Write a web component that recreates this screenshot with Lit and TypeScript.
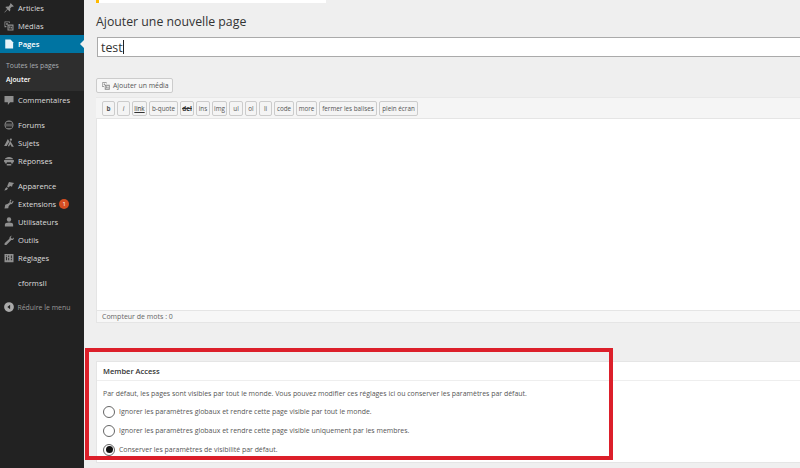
import { LitElement, html, css, svg } from "lit";
import { customElement } from "lit/decorators.js";

const icons: Record<string, any> = {
  pin: svg`<path d="M10.400 1.600l4 4-1.300 1-1-.5-2.600 2.600c.6 1.500.2 2.900-.6 3.900L6.200 9.900 2.400 14l-.6-.5 3.800-4.200-2.500-2.500c1-.9 2.500-1.200 3.900-.6l2.600-2.600-.4-1z"/>`,
  media: svg`<path d="M2 2h7v2H8V3H3v5h1.500v1.500H2z"/><circle cx="5.300" cy="5.300" r="1.200"/><path d="M6 6h8v8H6zm1.500 1.500v5h5v-5z" fill-rule="evenodd"/><path d="M8.300 8.400h1.500v3H8.300zM10.500 9h1.400v2.400h-1.400z"/>`,
  pages: svg`<path d="M3 2h7l3.500 3.500V14H3z"/>`,
  comment: svg`<path d="M2 2.500h12v8.500H9.500L6.500 14.500V11H2z"/>`,
  globe: svg`<path d="M8 2a6 6 0 1 1 0 12A6 6 0 0 1 8 2zM3.600 6.200h8.800V5.500c-.5-.9-1.300-1.600-2.200-1.900H5.800C4.900 3.900 4.100 4.600 3.600 5.500zM3 7.300v1.400h10V7.300zm.6 2.500v.7c.5.900 1.300 1.600 2.200 1.900h4.400c.9-.3 1.700-1 2.200-1.900v-.7z" fill-rule="evenodd"/>`,
  topics: svg`<path d="M6.500 2.500l2 3.500-3.500 6H1.500zM9.500 5l5 8h-3L9.800 9.500 8 12.500l-1.500-.5z"/><circle cx="10.500" cy="3.500" r="1.500"/>`,
  replies: svg`<path d="M8 2.500c2.800 0 5 1.300 5.500 3h-11c.5-1.700 2.700-3 5.500-3zM1.500 6.500h13v3H13l.5 1.500-2 .5-.8-2H5.300l-.8 2-2-.5L3 9.500H1.500zM5 12h6v2H5z"/>`,
  brush: svg`<path d="M8 2.500l7 1.500-2 1.500-1 3.500-2.500-1L7 10 5.500 8.500l1-2.500zM5 9.500l1.500 1.500c-.5 2-2.500 3-5 3 1.200-.8 1-3.200 3.500-4.500z"/>`,
  plugin: svg`<path d="M10 2l1.300.8-1.500 2.400 1.700 1 1.500-2.400 1.200.8-1.700 2.800c-.6 1-1.800 1.300-2.800.8L7.500 11l-.5 2.500L2 14l1-5 3.500-1.500L9 5.600c-.4-1-.2-1.600.2-2.200z"/>`,
  user: svg`<circle cx="8" cy="4.700" r="2.900"/><path d="M2.500 14v-2.500C2.500 9.500 4.500 8.500 8 8.500s5.500 1 5.500 3V14z"/>`,
  tool: svg`<path d="M14.500 4.500c.4 2-1.300 4-3.500 3.600L4.500 14.500c-.6.6-2.400.2-2.500-.5-.2-.8 0-1.500.5-2L8.500 6.300C8.200 4 10 2 12 2.200L10.300 4l.5 1.700 1.700.5z"/>`,
  settings: svg`<path d="M2 2.500h12v11H2zM4 6.500V11h1.200V6.500zm0-2v1h1.200v-1zm3 3V11h1.200V7.500zm0-3v2h1.200v-2zM10.500 9v2h1.200V9zm0-4.500V8h1.200V4.500z" fill-rule="evenodd"/>`,
  collapse: svg`<path d="M8 1.500a6.500 6.500 0 1 1 0 13 6.500 6.500 0 0 1 0-13zM9.500 5L5.800 8l3.700 3z" fill-rule="evenodd"/>`,
};

type Row = { icon?: string; label: string; cls?: string; badge?: boolean };
const top: Row[] = [
  { icon: "pin", label: "Articles", cls: "h-first" },
  { icon: "media", label: "Médias" },
];
const groups: Row[][] = [
  [{ icon: "comment", label: "Commentaires" }],
  [
    { icon: "globe", label: "Forums" },
    { icon: "topics", label: "Sujets" },
    { icon: "replies", label: "Réponses" },
  ],
  [
    { icon: "brush", label: "Apparence" },
    { icon: "plugin", label: "Extensions", badge: true },
    { icon: "user", label: "Utilisateurs" },
    { icon: "tool", label: "Outils" },
    { icon: "settings", label: "Réglages" },
  ],
  [{ label: "cformsII" }],
];
const tools: [string, number, string?][] = [
  ["b", 13, "bold"], ["i", 13, "ital"], ["link", 15, "link"], ["b-quote", 29], ["del", 14, "del"],
  ["ins", 14], ["img", 15], ["ul", 14], ["ol", 12], ["li", 13], ["code", 20], ["more", 21],
  ["fermer les balises", 58], ["plein écran", 39],
];

@customElement("app-root")
export class AppRoot extends LitElement {
  static styles = css`
    :host { display: block; width: 800px; height: 468px; overflow: hidden; position: relative;
      font-family: "Open Sans", sans-serif; background: #efefef; color: #444; }
    .page { display: flex; height: 468px; }
    .side { width: 84px; flex: none; background: #222; color: #ddd; font-size: 7.600px; display: flex; flex-direction: column; }
    .row { height: 18px; display: flex; align-items: center; flex: none; }
    .h-first { margin-top: -1px; }
    .row svg { width: 12px; height: 12px; margin-left: 2.500px; margin-right: 3.500px; fill: #8f8f8f; flex: none; }
    .noicon { padding-left: 18px; }
    .active { background: #0074a2; color: #fff; position: relative; font-weight: 600; }
    .active svg { fill: #e8f3f8; }
    .notch { position: absolute; right: 0; top: 5px; width: 0; height: 0; border: 4px solid transparent; border-right-color: #efefef; border-left-width: 0; }
    .sub { background: #2e2e2e; height: 38px; padding-top: 6.500px; box-sizing: border-box; display: flex; flex-direction: column; gap: 3px; font-size: 6.850px; flex: none; }
    .sub div { padding-left: 6px; height: 11px; line-height: 11px; color: #a8adb2; }
    .sub .cur { color: #fff; font-weight: 600; }
    .gap { height: 7px; flex: none; }
    .badge { width: 10px; height: 10px; border-radius: 50%; background: #d54e21; color: #fff; font-size: 6px; line-height: 10px; text-align: center; margin-left: 3px; }
    .collapse { color: #999; font-size: 6.900px; margin-top: 6px; }
    .collapse svg { fill: #aaa; width: 12px; height: 12px; margin-right: 3px; }
    .main { flex: 1; min-width: 0; padding-left: 12px; display: flex; flex-direction: column; }
    .notice { width: 227px; height: 3px; background: #fff; border-left: 3px solid #ffba00; flex: none; }
    h1 { margin: 9px 0 0; height: 25px; line-height: 20px; font-size: 12.300px; font-weight: 400; color: #333; flex: none; }
    .title { height: 20px; box-sizing: border-box; margin-left: 1px; border: 1px solid #aaa; border-right: 0; background: #fff; display: flex; align-items: center; font-size: 12.400px; color: #333; padding-left: 3px; flex: none; }
    .caret { width: 1px; height: 14px; background: #222; }
    .media { margin-top: 21px; align-self: flex-start; height: 15px; width: 77px; box-sizing: border-box; border: 1px solid #ccc; background: #f7f7f7; border-radius: 2px; font-size: 6.900px; color: #555; display: flex; align-items: center; gap: 2px; padding-left: 4px; flex: none; }
    .media svg { width: 10px; height: 10px; fill: #888; }
    .editor { margin-top: 4px; height: 226px; display: flex; flex-direction: column; flex: none; }
    .bar { height: 21px; box-sizing: border-box; background: #f5f5f5; border-top: 1px solid #e8e8e8; display: flex; align-items: center; gap: 2px; padding-left: 6px; flex: none; }
    .tb { height: 15px; line-height: 13px; box-sizing: border-box; border: 1px solid #ccc; border-radius: 2px; background: #f4f4f4; color: #555; font-size: 6.300px; text-align: center; white-space: nowrap; overflow: hidden; }
    .link { text-decoration: underline; color: #333; }
    .del { text-decoration: line-through; font-weight: 700; color: #333; }
    .bold { font-weight: 700; }
    .ital { font-style: italic; }
    .area { flex: 1; background: #fff; border: 1px solid #e5e5e5; border-width: 1px 0 0 1px; }
    .count { height: 13px; line-height: 12px; box-sizing: border-box; background: #f7f7f7; border: 1px solid #e5e5e5; border-right: 0; font-size: 7px; color: #666; padding-left: 5px; flex: none; }
    .box { margin-top: 38px; background: #fff; border: 1px solid #e5e5e5; border-right: 0; height: 102px; box-sizing: border-box; flex: none; }
    .box h2 { margin: 0; height: 19px; line-height: 18px; box-sizing: border-box; border-bottom: 1px solid #eee; font-size: 7.500px; font-weight: 600; color: #333; padding-left: 6px; }
    .body { padding: 7px 6px 0; font-size: 6.950px; color: #555; }
    .body p { margin: 0; height: 11px; line-height: 11px; }
    .opts { display: flex; flex-direction: column; margin-top: 3px; }
    .opt { display: flex; align-items: center; gap: 4px; height: 19px; }
    .radio { width: 12px; height: 12px; box-sizing: border-box; border: 1px solid #666; border-radius: 50%; background: #fff; display: flex; align-items: center; justify-content: center; flex: none; }
    .radio i { width: 7px; height: 7px; border-radius: 50%; background: #111; }
    .red { position: absolute; left: 85px; top: 348px; width: 528px; height: 112px; box-sizing: border-box; border: 4px solid #dc1f2a; pointer-events: none; }
  `;

  row(r: Row) {
    return html`<div class="row ${r.cls ?? ""} ${r.icon ? "" : "noicon"}">
      ${r.icon ? html`<svg viewBox="0 0 16 16">${icons[r.icon]}</svg>` : ""}
      <span class="lbl">${r.label}</span>
      ${r.badge ? html`<span class="badge">1</span>` : ""}
    </div>`;
  }

  render() {
    return html`<div class="page">
      <nav class="side">
        ${top.map((r) => this.row(r))}
        <div class="row active"><svg viewBox="0 0 16 16">${icons.pages}</svg><span>Pages</span><span class="notch"></span></div>
        <div class="sub"><div>Toutes les pages</div><div class="cur">Ajouter</div></div>
        ${groups.map((g, i) => html`${i ? html`<div class="gap"></div>` : ""}${g.map((r) => this.row(r))}`)}
        <div class="row collapse"><svg viewBox="0 0 16 16">${icons.collapse}</svg><span>Réduire le menu</span></div>
      </nav>
      <main class="main">
        <div class="notice"></div>
        <h1>Ajouter une nouvelle page</h1>
        <div class="title"><span>test</span><span class="caret"></span></div>
        <div class="media"><svg viewBox="0 0 16 16">${icons.media}</svg><span>Ajouter un média</span></div>
        <div class="editor">
          <div class="bar">
            ${tools.map(([t, w, c]) => html`<span class="tb ${c ?? ""}" style="width:${w}px">${t}</span>`)}
          </div>
          <div class="area"></div>
          <div class="count">Compteur de mots : 0</div>
        </div>
        <section class="box">
          <h2>Member Access</h2>
          <div class="body">
            <p>Par défaut, les pages sont visibles par tout le monde. Vous pouvez modifier ces réglages ici ou conserver les paramètres par défaut.</p>
            <div class="opts">
              <label class="opt"><span class="radio"></span><span>Ignorer les paramètres globaux et rendre cette page visible par tout le monde.</span></label>
              <label class="opt"><span class="radio"></span><span>Ignorer les paramètres globaux et rendre cette page visible uniquement par les membres.</span></label>
              <label class="opt"><span class="radio"><i></i></span><span>Conserver les paramètres de visibilité par défaut.</span></label>
            </div>
          </div>
        </section>
      </main>
    </div>
    <div class="red"></div>`;
  }
}
